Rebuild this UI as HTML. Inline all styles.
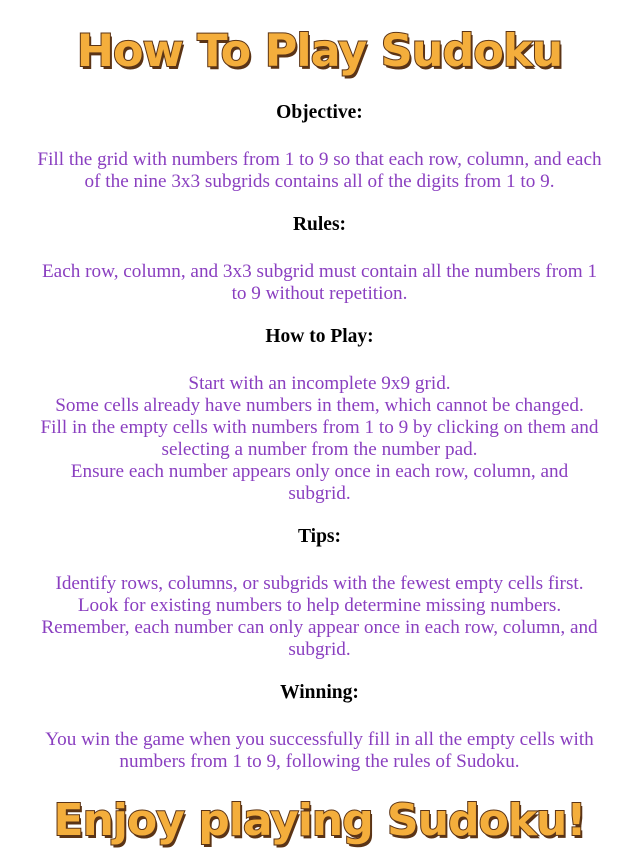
<!DOCTYPE html>
<html><head><meta charset="utf-8"><style>
html,body{margin:0;padding:0;background:#fff;width:639px;height:858px;overflow:hidden;position:relative}
.t{position:absolute;left:0;width:639px;text-align:center;font-family:"DejaVu Sans",sans-serif;font-weight:bold;color:#f4ae3c;-webkit-text-stroke:2px #5b3416;text-shadow:2px 3px 0 #5b3416;white-space:nowrap;paint-order:stroke fill}
.h{position:absolute;left:0;width:639px;text-align:center;font:bold 19.5px "Liberation Serif",serif;color:#000;line-height:22px}
.p{position:absolute;left:0;width:639px;text-align:center;font:19.2px "Liberation Serif",serif;color:#8a3fc0;line-height:22px;white-space:nowrap}
</style></head><body>
<div class="t" style="top:26px;font-size:44.5px;letter-spacing:-1px">How To Play Sudoku</div>
<div class="h" style="top:102px">Objective:</div>
<div class="p" style="top:149px">Fill the grid with numbers from 1 to 9 so that each row, column, and each<br>of the nine 3x3 subgrids contains all of the digits from 1 to 9.</div>
<div class="h" style="top:214px">Rules:</div>
<div class="p" style="top:261px">Each row, column, and 3x3 subgrid must contain all the numbers from 1<br>to 9 without repetition.</div>
<div class="h" style="top:326px">How to Play:</div>
<div class="p" style="top:373px">Start with an incomplete 9x9 grid.<br>Some cells already have numbers in them, which cannot be changed.<br>Fill in the empty cells with numbers from 1 to 9 by clicking on them and<br>selecting a number from the number pad.<br>Ensure each number appears only once in each row, column, and<br>subgrid.</div>
<div class="h" style="top:526px">Tips:</div>
<div class="p" style="top:573px">Identify rows, columns, or subgrids with the fewest empty cells first.<br>Look for existing numbers to help determine missing numbers.<br>Remember, each number can only appear once in each row, column, and<br>subgrid.</div>
<div class="h" style="top:682px">Winning:</div>
<div class="p" style="top:729px">You win the game when you successfully fill in all the empty cells with<br>numbers from 1 to 9, following the rules of Sudoku.</div>
<div class="t" style="top:795px;font-size:44px;letter-spacing:-1px">Enjoy playing Sudoku!</div>
</body></html>
